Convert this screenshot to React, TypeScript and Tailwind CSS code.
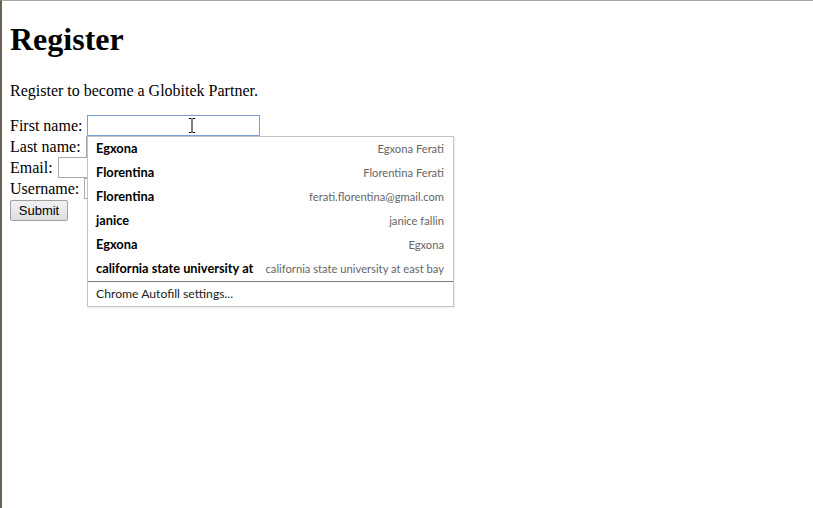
const rows = [
  { value: 'Egxona', label: 'Egxona Ferati' },
  { value: 'Florentina', label: 'Florentina Ferati' },
  { value: 'Florentina', label: 'ferati.florentina@gmail.com' },
  { value: 'janice', label: 'janice fallin' },
  { value: 'Egxona', label: 'Egxona' },
  { value: 'california state university at', label: 'california state university at east bay' },
];

const App = () => {
  return (
    <div className="relative h-[508px] w-[813px] overflow-hidden border-t border-l-2 border-t-[#a8a8a8] border-l-[#6b6258] bg-white font-['Liberation_Serif',serif] text-[16px] leading-[19px] text-black">
      <div className="px-2">
        <h1 className="pt-[20px] text-[32px] font-bold leading-[37px]">Register</h1>
        <p className="mt-[23px]">Register to become a Globitek Partner.</p>
        <form className="mt-[15px] leading-[21px]">
          <div className="flex items-center">
            First name:
            <span className="relative ml-[5px] inline-block h-[21px] w-[173px] border border-[#78a0d8] bg-white">
              <svg className="absolute left-[100px] top-[2px]" width="8" height="15" viewBox="0 0 8 15">
                <path d="M1 0.5h2.5M4.5 0.5H7M4 1v13M1 14.5h2.5M4.5 14.5H7" stroke="#000" strokeWidth="1" fill="none" />
              </svg>
            </span>
          </div>
          <div className="flex items-center">
            Last name:
            <span className="ml-[5px] inline-block h-[21px] w-[173px] border border-[#a9a9a9]" />
          </div>
          <div className="flex items-center">
            Email:
            <span className="ml-[5px] inline-block h-[21px] w-[173px] border border-[#a9a9a9]" />
          </div>
          <div className="flex items-center">
            Username:
            <span className="ml-[5px] inline-block h-[21px] w-[173px] border border-[#a9a9a9]" />
          </div>
          <button
            type="button"
            className="-mt-[3px] h-[21px] w-[58px] rounded-[2px] border border-[#a0a0a0] bg-gradient-to-b from-[#f2f2f2] to-[#dddddd] font-['Liberation_Sans',sans-serif] text-[13px] leading-[19px]"
          >
            Submit
          </button>
        </form>
      </div>

      <div className="absolute left-[85px] top-[135px] w-[367px] border border-[#c4c4c4] bg-white font-['Lato',sans-serif] shadow-[1px_1px_2px_rgba(0,0,0,0.08)]">
        {rows.map((r, i) => (
          <div key={i} className="flex h-[24px] items-center justify-between whitespace-nowrap pb-[2px] pl-[8px] pr-[9px]">
            <span className="text-[12.8px] font-bold text-black">{r.value}</span>
            <span className="text-[11.2px] text-[#666]">{r.label}</span>
          </div>
        ))}
        <div className="border-t border-[#7a7a7a]" />
        <div className="flex h-[24px] items-center pb-[2px] pl-[8px] text-[12.2px] text-[#222]">Chrome Autofill settings...</div>
      </div>
    </div>
  );
};

export default App;
